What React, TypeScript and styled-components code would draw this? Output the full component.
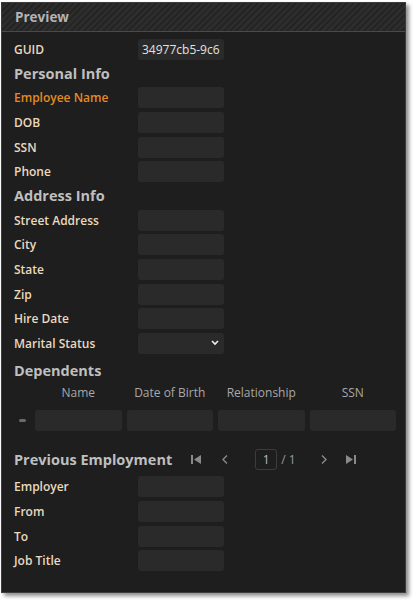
import React from "react";
import styled, { createGlobalStyle } from "styled-components";

const Global = createGlobalStyle`
  html, body {
    margin: 0;
    padding: 0;
    background: #ffffff;
  }
  body {
    font-family: "Open Sans", "Noto Sans", sans-serif;
  }
`;

const Page = styled.div`
  padding: 2px 0 0 1px;
  width: 413px;
  height: 600px;
  box-sizing: border-box;
`;

const Panel = styled.div`
  width: 405px;
  height: 591px;
  box-sizing: border-box;
  background: #1e1e1e;
  border: 1px solid #3c3c3c;
  box-shadow: 3px 3px 4px rgba(0, 0, 0, 0.45);
  display: flex;
  flex-direction: column;
`;

const Header = styled.div`
  height: 28px;
  flex: none;
  display: flex;
  align-items: center;
  padding-left: 13px;
  border-bottom: 1px solid #4a4a4a;
  background: repeating-linear-gradient(
    135deg,
    #242424 0px,
    #242424 2px,
    #2d2d2d 2px,
    #2d2d2d 4.5px
  );
  color: #b4b4b4;
  font-size: 13.5px;
  font-weight: 700;
`;

const Body = styled.div`
  padding: 5px 9px 0 12px;
  display: flex;
  flex-direction: column;
`;

const Row = styled.div`
  height: 24.6px;
  display: flex;
  align-items: center;
`;

const Label = styled.div<{ $accent?: boolean }>`
  width: 124px;
  flex: none;
  font-size: 12px;
  font-weight: 600;
  color: ${(p) => (p.$accent ? "#e38b21" : "#e9d9bf")};
`;

const Field = styled.div`
  width: 86px;
  height: 21px;
  box-sizing: border-box;
  background: #2a2a2a;
  border-radius: 3px;
  display: flex;
  align-items: center;
  padding: 0 4px;
  color: #e2e2e2;
  font-size: 12px;
  position: relative;
`;

const SectionTitle = styled.div<{ $h?: number }>`
  height: ${(p) => p.$h ?? 24}px;
  display: flex;
  align-items: center;
  color: #bfbfbf;
  font-size: 14.5px;
  font-weight: 700;
`;

const Grid = styled.div`
  display: grid;
  grid-template-columns: 16px repeat(4, 1fr);
  column-gap: 5px;
  width: 382px;
`;

const ColHead = styled.div`
  height: 14px;
  display: flex;
  align-items: center;
  justify-content: center;
  color: #a8a8a8;
  font-size: 12px;
`;

const Cell = styled.div`
  height: 21px;
  margin-top: 10px;
  background: #2a2a2a;
  border-radius: 3px;
`;

const Handle = styled.div`
  margin-top: 10px;
  height: 21px;
  display: flex;
  align-items: center;
  padding-left: 5px;

  &::before {
    content: "";
    width: 7px;
    height: 3px;
    border-radius: 2px;
    background: #6a6a6a;
  }
`;

const EmpTitle = styled.div`
  margin-top: 14px;
  height: 30px;
  display: flex;
  align-items: center;
  color: #bfbfbf;
  font-size: 14.5px;
  font-weight: 700;
  white-space: nowrap;
`;

const Pager = styled.div`
  display: flex;
  align-items: center;
  margin-left: 18px;
  color: #8a8a8a;
  font-size: 12px;
  font-weight: 400;
`;

const PagerBtn = styled.div<{ $gap?: number }>`
  height: 21px;
  flex: none;
  display: flex;
  align-items: center;
  margin-left: ${(p) => p.$gap ?? 0}px;
`;

const PageBox = styled.div`
  width: 22px;
  height: 21px;
  flex: none;
  box-sizing: border-box;
  border: 1px solid #3c3c3c;
  border-radius: 3px;
  display: flex;
  align-items: center;
  justify-content: center;
  color: #bdbdbd;
  margin-left: 26px;
`;

const PageCount = styled.span`
  margin-left: 4px;
  flex: none;
  white-space: nowrap;
  color: #9a9a9a;
`;

const Chevron = styled.svg`
  position: absolute;
  right: 5px;
  top: 7px;
`;

const First = () => (
  <svg width="12" height="11" viewBox="0 0 12 11">
    <rect x="1" y="1" width="2" height="9" fill="#8a8a8a" />
    <path d="M11 1 L4 5.5 L11 10 Z" fill="#8a8a8a" />
  </svg>
);

const Last = () => (
  <svg width="12" height="11" viewBox="0 0 12 11">
    <path d="M1 1 L8 5.5 L1 10 Z" fill="#8a8a8a" />
    <rect x="9" y="1" width="2" height="9" fill="#8a8a8a" />
  </svg>
);

const Prev = () => (
  <svg width="8" height="11" viewBox="0 0 8 11">
    <path d="M6 1.5 L2 5.5 L6 9.5" stroke="#8a8a8a" strokeWidth="1.4" fill="none" />
  </svg>
);

const Next = () => (
  <svg width="8" height="11" viewBox="0 0 8 11">
    <path d="M2 1.5 L6 5.5 L2 9.5" stroke="#8a8a8a" strokeWidth="1.4" fill="none" />
  </svg>
);

const FormRow = ({
  label,
  value,
  accent,
  select,
}: {
  label: string;
  value?: string;
  accent?: boolean;
  select?: boolean;
}) => (
  <Row>
    <Label $accent={accent}>{label}</Label>
    <Field>
      {value}
      {select && (
        <Chevron width="8" height="6" viewBox="0 0 8 6">
          <path d="M1 1 L4 4 L7 1" stroke="#f0f0f0" strokeWidth="1.6" fill="none" />
        </Chevron>
      )}
    </Field>
  </Row>
);

export default function App() {
  return (
    <Page>
      <Global />
      <Panel>
        <Header>Preview</Header>
        <Body>
          <FormRow label="GUID" value="34977cb5-9c6" />
          <SectionTitle>Personal Info</SectionTitle>
          <FormRow label="Employee Name" accent />
          <FormRow label="DOB" />
          <FormRow label="SSN" />
          <FormRow label="Phone" />
          <SectionTitle>Address Info</SectionTitle>
          <FormRow label="Street Address" />
          <FormRow label="City" />
          <FormRow label="State" />
          <FormRow label="Zip" />
          <FormRow label="Hire Date" />
          <FormRow label="Marital Status" select />
          <SectionTitle $h={30}>Dependents</SectionTitle>
          <Grid>
            <div />
            <ColHead>Name</ColHead>
            <ColHead>Date of Birth</ColHead>
            <ColHead>Relationship</ColHead>
            <ColHead>SSN</ColHead>
            <Handle />
            <Cell />
            <Cell />
            <Cell />
            <Cell />
          </Grid>
          <EmpTitle>
            Previous Employment
            <Pager>
              <PagerBtn>
                <First />
              </PagerBtn>
              <PagerBtn $gap={19}>
                <Prev />
              </PagerBtn>
              <PageBox>1</PageBox>
              <PageCount>/ 1</PageCount>
              <PagerBtn $gap={24}>
                <Next />
              </PagerBtn>
              <PagerBtn $gap={17}>
                <Last />
              </PagerBtn>
            </Pager>
          </EmpTitle>
          <FormRow label="Employer" />
          <FormRow label="From" />
          <FormRow label="To" />
          <FormRow label="Job Title" />
        </Body>
      </Panel>
    </Page>
  );
}
